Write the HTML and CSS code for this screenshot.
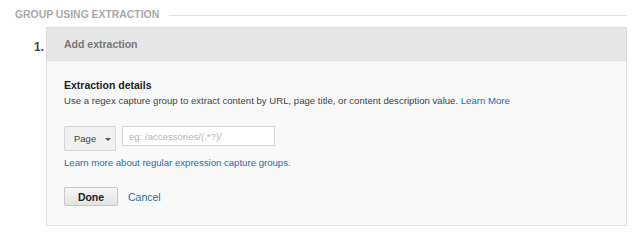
FILE: index.html
```html
<!DOCTYPE html>
<html>
<head>
<meta charset="utf-8">
<link rel="stylesheet" href="styles.css">
</head>
<body>
<div class="page">
  <div class="section-title">
    <span class="title-text">GROUP USING EXTRACTION</span>
    <span class="title-rule"></span>
  </div>
  <div class="step">
    <div class="step-num">1.</div>
    <div class="card">
      <div class="card-head">Add extraction</div>
      <div class="card-body">
        <div class="details-title">Extraction details</div>
        <div class="details-desc">Use a regex capture group to extract content by URL, page title, or content description value. <a class="link" href="#">Learn More</a></div>
        <div class="controls">
          <button class="select-btn">Page <span class="caret"></span></button>
          <input class="regex-input" type="text" placeholder="eg: /accessories/(.*?)/">
        </div>
        <a class="link help-link" href="#">Learn more about regular expression capture groups.</a>
        <div class="actions">
          <button class="done-btn">Done</button>
          <a class="link cancel" href="#">Cancel</a>
        </div>
      </div>
    </div>
  </div>
</div>
</body>
</html>
```
FILE: styles.css
```css
html, body {
  margin: 0;
  padding: 0;
  background: #fdfefd;
  font-family: "Liberation Sans", Arial, sans-serif;
}
.page {
  width: 640px;
  height: 242px;
  padding: 8px 0 0 15px;
  box-sizing: border-box;
}
.section-title {
  display: flex;
  align-items: center;
  height: 13px;
  width: 612px;
}
.title-text {
  font-size: 10.4px;
  font-weight: bold;
  color: #a9a9a9;
  white-space: nowrap;
}
.title-rule {
  flex: 1;
  height: 0;
  border-top: 1px solid #e3e3e3;
  margin-left: 10px;
  margin-top: 1px;
}
.step {
  display: flex;
  margin-top: 6px;
}
.step-num {
  width: 31px;
  padding-left: 19px;
  box-sizing: border-box;
  font-size: 12px;
  font-weight: bold;
  color: #444;
  padding-top: 13px;
}
.card {
  width: 581px;
}
.card-head {
  height: 32px;
  background: #e6e6e6;
  border: 1px solid #dcdcdc;
  border-bottom: none;
  font-size: 10.5px;
  font-weight: bold;
  color: #777;
  padding-left: 17px;
  line-height: 33px;
}
.card-body {
  background: #f8f8f8;
  border: 1px solid #e2e2e2;
  padding: 17px 0 16px 17px;
  height: 131px;
}
.details-title {
  font-size: 10.5px;
  font-weight: bold;
  color: #222;
  line-height: 14px;
}
.details-desc {
  font-size: 9.6px;
  color: #444;
  line-height: 14px;
  margin-top: 2px;
}
.link {
  color: #1d6fb3;
  text-decoration: none;
}
.controls {
  display: flex;
  align-items: flex-start;
  margin-top: 18px;
}
.select-btn {
  width: 52px;
  height: 25px;
  border: 1px solid #d6d6d6;
  border-radius: 2px;
  background: #f1f1f1;
  font-family: inherit;
  font-size: 9.5px;
  color: #444;
  padding: 0 0 0 9px;
  text-align: left;
  display: flex;
  align-items: center;
}
.caret {
  display: inline-block;
  width: 0;
  height: 0;
  border-left: 3px solid transparent;
  border-right: 3px solid transparent;
  border-top: 3px solid #555;
  margin-left: 9px;
  margin-top: 1px;
}
.regex-input {
  width: 153px;
  height: 20px;
  box-sizing: border-box;
  margin-left: 6px;
  border: 1px solid #d6d6d6;
  background: #fff;
  font-family: inherit;
  font-size: 9.6px;
  padding: 0 6px;
  color: #333;
}
.regex-input::placeholder {
  color: #b5b5b5;
}
.help-link {
  display: block;
  font-size: 9.6px;
  margin-top: 5px;
  line-height: 14px;
}
.actions {
  display: flex;
  align-items: center;
  margin-top: 17px;
}
.done-btn {
  width: 54px;
  height: 19px;
  border: 1px solid #c8c8c8;
  border-radius: 2px;
  background: linear-gradient(#f6f6f6, #e2e2e2);
  font-family: inherit;
  font-size: 10.5px;
  font-weight: bold;
  color: #222;
  padding: 0;
}
.cancel {
  font-size: 10.5px;
  margin-left: 10px;
}
```
